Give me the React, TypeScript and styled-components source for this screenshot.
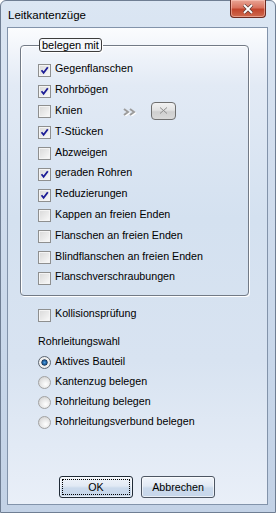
import styled, { createGlobalStyle } from "styled-components";

const GlobalStyle = createGlobalStyle`
  html, body {
    margin: 0;
    padding: 0;
  }
  body {
    font-family: "Liberation Sans", Arial, sans-serif;
    font-size: 10.7px;
    color: #000;
  }
`;

const checkItems = [
  { label: "Gegenflanschen", checked: true },
  { label: "Rohrbögen", checked: true },
  { label: "Knien", checked: false, extra: true },
  { label: "T-Stücken", checked: true },
  { label: "Abzweigen", checked: false },
  { label: "geraden Rohren", checked: true },
  { label: "Reduzierungen", checked: true },
  { label: "Kappen an freien Enden", checked: false },
  { label: "Flanschen an freien Enden", checked: false },
  { label: "Blindflanschen an freien Enden", checked: false },
  { label: "Flanschverschraubungen", checked: false },
];

const radioItems = [
  { label: "Aktives Bauteil", selected: true },
  { label: "Kantenzug belegen", selected: false },
  { label: "Rohrleitung belegen", selected: false },
  { label: "Rohrleitungsverbund belegen", selected: false },
];

const CheckMark = () => (
  <svg width="11" height="11" viewBox="0 0 11 11">
    <path d="M2.5 5.2 L4.6 7.8 L8.8 2.2" fill="none" stroke="#1d1d96" strokeWidth="1.8" />
  </svg>
);

const App = () => {
  return (
    <>
      <GlobalStyle />
      <Window>
        <TitleBar>
          <Title>Leitkantenzüge</Title>
          <CloseButton>
            <svg width="12" height="10" viewBox="0 0 12 10">
              <path d="M2 1 L10 9 M10 1 L2 9" stroke="#5a3a36" strokeWidth="3.2" />
              <path d="M2 1 L10 9 M10 1 L2 9" stroke="#ffffff" strokeWidth="1.8" />
            </svg>
          </CloseButton>
        </TitleBar>
        <Client>
          <Group>
            <Legend>belegen mit</Legend>
            {checkItems.map((item) => (
              <CheckRow key={item.label}>
                <CheckBox>{item.checked && <CheckMark />}</CheckBox>
                <Label>{item.label}</Label>
                {item.extra && (
                  <>
                    <Arrow>
                      <svg width="16" height="8" viewBox="0 0 16 8">
                        <path d="M1 1 L5 4 L1 7 M7 1 L11 4 L7 7" fill="none" stroke="#ffffff" strokeWidth="2" transform="translate(1 1)" />
                        <path d="M1 1 L5 4 L1 7 M7 1 L11 4 L7 7" fill="none" stroke="#9c9c9c" strokeWidth="2" />
                      </svg>
                    </Arrow>
                    <SmallButton>
                      <svg width="9" height="7" viewBox="0 0 9 7">
                        <path d="M1 0.5 L8 6.5 M8 0.5 L1 6.5" stroke="#8e8e8e" strokeWidth="1" />
                      </svg>
                    </SmallButton>
                  </>
                )}
              </CheckRow>
            ))}
          </Group>
          <OptionRow>
            <CheckBox />
            <Label>Kollisionsprüfung</Label>
          </OptionRow>
          <Caption>Rohrleitungswahl</Caption>
          <RadioList>
            {radioItems.map((item) => (
              <RadioRow key={item.label}>
                <Radio selected={item.selected} />
                <Label>{item.label}</Label>
              </RadioRow>
            ))}
          </RadioList>
          <ButtonBar>
            <DialogButton isDefault={true}>
              <Focus isDefault={true}>OK</Focus>
            </DialogButton>
            <DialogButton isDefault={false}>
              <Focus isDefault={false}>Abbrechen</Focus>
            </DialogButton>
          </ButtonBar>
        </Client>
      </Window>
    </>
  );
};

const Window = styled.div`
  box-sizing: border-box;
  width: 276px;
  height: 513px;
  display: flex;
  flex-direction: column;
  border: 1px solid #6f7e93;
  border-radius: 6px 6px 0 0;
  background: linear-gradient(180deg, #dbe6f3 0%, #d2deee 30%, #c8d7ea 70%, #c3d2e6 100%);
`;

const TitleBar = styled.div`
  height: 26px;
  display: flex;
  align-items: flex-start;
  justify-content: space-between;
  padding-left: 7px;
`;

const Title = styled.div`
  font-size: 11.5px;
  line-height: 14px;
  margin-top: 7px;
  color: #000;
`;

const CloseButton = styled.div`
  box-sizing: border-box;
  width: 36px;
  height: 18px;
  margin-top: -1px;
  margin-right: 9px;
  display: flex;
  align-items: center;
  justify-content: center;
  border: 1px solid #6c2a20;
  border-top: none;
  border-radius: 0 0 4px 4px;
  background: linear-gradient(180deg, #e9a595 0%, #d9735f 45%, #c2452d 55%, #cf6a4e 100%);
  box-shadow: inset 0 0 0 1px rgba(255, 210, 200, 0.5);
`;

const Client = styled.div`
  flex: 1;
  display: flex;
  flex-direction: column;
  margin: 0 7px 7px 6px;
  border: 1px solid #8293aa;
  background: linear-gradient(180deg, #fbfcfe 0%, #e2eaf5 12%, #d4e1f0 40%, #d8e3f1 70%, #e9eff8 100%);
`;

const Group = styled.fieldset`
  box-sizing: border-box;
  width: 229px;
  margin: 10px 0 0 12px;
  padding: 8px 0 6px 17px;
  border: 1px solid #727a86;
  border-radius: 4px;
  box-shadow: 1px 1px 0 #ffffff, inset 1px 1px 0 #ffffff;
`;

const Legend = styled.legend`
  box-sizing: border-box;
  height: 14px;
  margin-left: 1px;
  padding: 0 2px;
  line-height: 12px;
  font-size: 11px;
  border: 1px solid #3d3d3d;
  border-radius: 3px;
  box-shadow: 1px 1px 0 #ffffff;
`;

const CheckRow = styled.div`
  height: 20.8px;
  display: flex;
  align-items: center;
`;

const OptionRow = styled(CheckRow)`
  margin: 9px 0 0 30px;
`;

const CheckBox = styled.div`
  box-sizing: border-box;
  width: 13px;
  height: 13px;
  flex: none;
  display: flex;
  align-items: center;
  justify-content: center;
  border: 1px solid #8e8f8f;
  background: linear-gradient(135deg, #d9d9d9 0%, #ececec 60%, #fbfbfb 100%);
  box-shadow: inset 0 0 0 1px #f4f4f4;
`;

const Label = styled.span`
  margin: 0 0 3px 4px;
  line-height: 13px;
  white-space: nowrap;
`;

const Arrow = styled.span`
  display: flex;
  margin: 1px 0 0 41px;
`;

const SmallButton = styled.div`
  box-sizing: border-box;
  width: 25px;
  height: 18px;
  margin: 0 0 2px 12px;
  display: flex;
  align-items: center;
  justify-content: center;
  border: 1px solid #6f6f6f;
  border-radius: 4px;
  background: linear-gradient(180deg, #f2f2f2 0%, #e2e2e2 45%, #cfcfcf 55%, #d9d9d9 100%);
`;

const Caption = styled.div`
  margin: 9px 0 0 30px;
  line-height: 13px;
`;

const RadioList = styled.div`
  margin: 5px 0 0 30px;
  display: flex;
  flex-direction: column;
`;

const RadioRow = styled.div`
  height: 20px;
  display: flex;
  align-items: center;
`;

const Radio = styled.div<{ selected: boolean }>`
  box-sizing: border-box;
  width: 13px;
  height: 13px;
  flex: none;
  border-radius: 50%;
  border: 1px solid ${(p) => (p.selected ? "#5d6670" : "#a2a2a2")};
  background: ${(p) =>
    p.selected
      ? "radial-gradient(circle at 50% 50%, #4f9ede 0%, #1f5f9f 25%, #163456 36%, #e6e6e6 44%, #f4f4f4 60%, #c9c9c9 100%)"
      : "radial-gradient(circle at 60% 65%, #ffffff 0%, #e6e6e6 50%, #c8c8c8 100%)"};
`;

const ButtonBar = styled.div`
  margin-top: auto;
  padding: 0 0 6px 51px;
  display: flex;
  gap: 8px;
`;

const DialogButton = styled.div<{ isDefault: boolean }>`
  box-sizing: border-box;
  width: 74px;
  height: 22px;
  padding: 2px;
  display: flex;
  border: 1px solid ${(p) => (p.isDefault ? "#1f2a36" : "#4d5663")};
  border-radius: 3px;
  background: linear-gradient(180deg, #f1f5fb 0%, #e1e9f4 45%, #cbdaec 55%, #c6d6ea 100%);
  box-shadow: inset 0 0 0 1px rgba(255, 255, 255, 0.6);
`;

const Focus = styled.span<{ isDefault: boolean }>`
  flex: 1;
  display: flex;
  align-items: center;
  justify-content: center;
  border: 1px dotted ${(p) => (p.isDefault ? "#000" : "transparent")};
`;

export default App;
